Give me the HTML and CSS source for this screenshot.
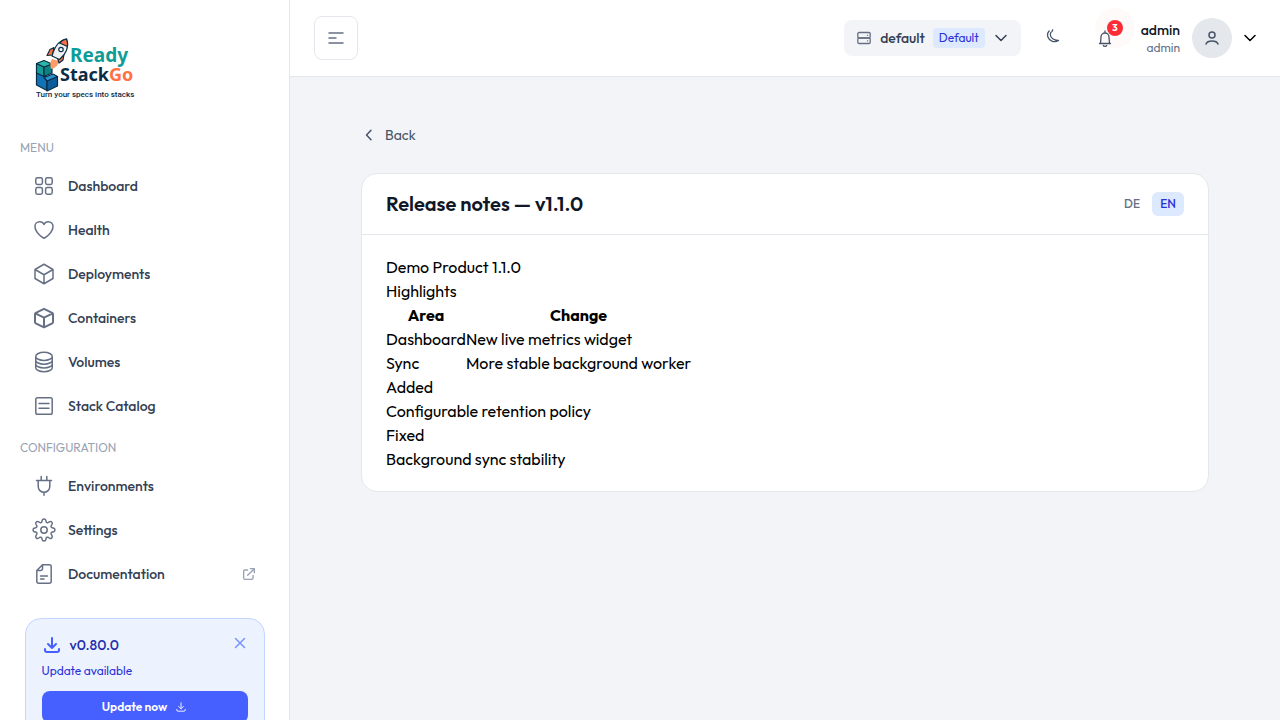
FILE: index.html
```html
<!DOCTYPE html>
<html lang="en">
<head>
  <meta charset="UTF-8">
  <meta name="viewport" content="width=device-width, initial-scale=1.0">
  <title>ReadyStackGo</title>
  <link rel="stylesheet" href="styles.css">
</head>

<body>
  <aside class="sidebar">
    <a href="#" class="logo" aria-label="ReadyStackGo">
      <svg width="110" height="68" viewBox="0 0 110 68">
        <!-- stacked cubes -->
        <g stroke="#0b2c45" stroke-width="1.2" stroke-linejoin="round">
          <path d="M6.500 38l10.500 5v13.500L6.500 51z" fill="#1173b5"/>
          <path d="M17 46.500l10.500-4v9.500L17 57z" fill="#0d5c99"/>
          <path d="M14 43.500l9-3.500 4.500 2.500L17 47z" fill="#2a94d0"/>
          <path d="M6.500 29.500l7.500 3.500v9.500L6.500 39z" fill="#159c97"/>
          <path d="M14 33l8-3v9l-8 3.500z" fill="#0c817f"/>
          <path d="M6.500 29.500L14 26.500l8 3.500-8 3z" fill="#2ab7aa"/>
        </g>
        <!-- rocket -->
        <path d="M22 25c-2 3-2 6-1 10 5-1 7-4 8-8z" fill="#ff9b66"/>
        <g stroke="#0b2c45" stroke-width="1.2" stroke-linejoin="round">
          <path d="M24 13.500l-4 2-3 6 5.500-.5zM34 20l-1 6-4 3-1.500-5z" fill="#ff7043"/>
          <path d="M36.500 5c-7 1-12 8-14.500 17l7.500 3.500c7-6 10-12 7-20.500z" fill="#eef1f2"/>
          <path d="M36.500 5c-3 .5-5 2-7 4l8 3.500c.3-3 0-5-1-7.500z" fill="#ff7043"/>
          <circle cx="31" cy="15.500" r="2.200" fill="#fff"/>
        </g>
        <text x="40" y="28" class="logo-ready">Ready</text>
        <text x="30" y="47" class="logo-stack">Stack<tspan class="logo-go">Go</tspan></text>
        <text x="6" y="63" class="logo-tagline">Turn your specs into stacks</text>
      </svg>
    </a>

    <nav>
      <h2 class="menu-title">MENU</h2>
      <ul class="menu">
        <li><a href="#" class="menu-item">
          <svg class="icon" viewBox="0 0 24 24"><rect x="3.8" y="3.8" width="6.6" height="6.6" rx="1.6"/><rect x="13.6" y="3.8" width="6.6" height="6.6" rx="1.6"/><rect x="3.8" y="13.6" width="6.6" height="6.6" rx="1.6"/><rect x="13.6" y="13.6" width="6.6" height="6.6" rx="1.6"/></svg>
          Dashboard</a></li>
        <li><a href="#" class="menu-item">
          <svg class="icon" viewBox="0 0 24 24"><path d="M21 8.25c0-2.485-2.099-4.5-4.688-4.5-1.935 0-3.597 1.126-4.312 2.733-.715-1.607-2.377-2.733-4.313-2.733C5.1 3.75 3 5.765 3 8.25c0 7.22 9 12 9 12s9-4.78 9-12z"/></svg>
          Health</a></li>
        <li><a href="#" class="menu-item">
          <svg class="icon" viewBox="0 0 24 24"><path d="M21 7.5l-9-5.25L3 7.5m18 0l-9 5.25m9-5.25v9l-9 5.25M3 7.5l9 5.25M3 7.5v9l9 5.25m0-9v9"/></svg>
          Deployments</a></li>
        <li><a href="#" class="menu-item">
          <svg class="icon icon-bold" viewBox="0 0 24 24"><path d="M12 2.8l8.2 4.1c.5.3.8.7.8 1.200v8c0 .5-.3.9-.8 1.200L12 21.300l-8.200-4c-.5-.3-.8-.7-.8-1.200v-8c0-.5.3-.9.800-1.200zM3.300 7.400L12 11.700l8.700-4.300M12 11.700v9.300"/></svg>
          Containers</a></li>
        <li><a href="#" class="menu-item">
          <svg class="icon" viewBox="0 0 24 24"><path d="M20.250 6.375c0 2.278-3.694 4.125-8.250 4.125S3.750 8.653 3.750 6.375m16.500 0c0-2.278-3.694-4.125-8.250-4.125S3.750 4.097 3.750 6.375m16.500 0v11.250c0 2.278-3.694 4.125-8.250 4.125s-8.250-1.847-8.250-4.125V6.375m16.500 0v3.750m-16.500-3.750v3.750m16.500 0v3.750C20.250 16.153 16.556 18 12 18s-8.250-1.847-8.250-4.125v-3.750m16.500 0c0 2.278-3.694 4.125-8.250 4.125s-8.250-1.847-8.250-4.125"/></svg>
          Volumes</a></li>
        <li><a href="#" class="menu-item">
          <svg class="icon" viewBox="0 0 24 24"><rect x="3.800" y="3.800" width="16.400" height="16.400" rx="1.800"/><path d="M7 9.500h10M7 14.200h10"/></svg>
          Stack Catalog</a></li>
      </ul>

      <h2 class="menu-title">CONFIGURATION</h2>
      <ul class="menu">
        <li><a href="#" class="menu-item">
          <svg class="icon" viewBox="0 0 24 24"><path d="M4.500 6.500h15M9.200 2.500v4M14.800 2.500v4M6.200 6.500v6a5.800 5.800 0 0 0 11.600 0v-6M12 18.300v3"/></svg>
          Environments</a></li>
        <li><a href="#" class="menu-item">
          <svg class="icon" viewBox="0 0 24 24"><path d="M10.100 2.600c.4-2.200 3.400-2.200 3.800 0l.2 1c.2 1 1.400 1.500 2.300.9l.8-.6c1.900-1.300 4 .8 2.700 2.700l-.6.8c-.6.9-.1 2.100.9 2.300l1.100.4c2.200.4 2.200 3.400 0 3.800l-1.100.2c-1 .2-1.500 1.400-.9 2.300l.6.900c1.300 1.900-.8 4-2.700 2.700l-.8-.6c-.9-.6-2.100-.1-2.300.9l-.2 1.100c-.4 2.200-3.400 2.200-3.800 0l-.2-1.100c-.2-1-1.400-1.500-2.300-.9l-.8.6c-1.900 1.300-4-.8-2.700-2.700l.6-.9c.6-.9.100-2.100-.9-2.300l-1.100-.2c-2.200-.4-2.200-3.400 0-3.800l1.100-.4c1-.2 1.500-1.400.9-2.300l-.6-.8c-1.300-1.900.8-4 2.700-2.700l.8.6c.9.600 2.100.1 2.300-.9z"/><circle cx="12" cy="12" r="3.200"/></svg>
          Settings</a></li>
        <li><a href="#" class="menu-item">
          <svg class="icon" viewBox="0 0 24 24"><path d="M10.500 2.800h6.700c1.200 0 2 .8 2 2v14.400c0 1.200-.8 2-2 2H6.800c-1.200 0-2-.8-2-2V8.500zM10.500 2.800v4c0 1-.7 1.700-1.700 1.700h-4M8.500 14h7M8.500 17h3.500"/></svg>
          Documentation
          <svg class="icon icon-external" viewBox="0 0 24 24"><path d="M10 6H6a2 2 0 0 0-2 2v10a2 2 0 0 0 2 2h10a2 2 0 0 0 2-2v-4M14 4h6m0 0v6m0-6L10 14"/></svg></a></li>
      </ul>
    </nav>

    <section class="update-card">
      <div class="update-head">
        <svg class="icon update-icon" viewBox="0 0 20 20"><path d="M10 3v10m-4-4l4 4 4-4M3 14v1a2 2 0 0 0 2 2h10a2 2 0 0 0 2-2v-1"/></svg>
        <span class="update-version">v0.80.0</span>
        <button type="button" class="update-close" aria-label="Dismiss">
          <svg class="icon" viewBox="0 0 16 20"><path d="M3.500 3.500l9 9m0-9l-9 9"/></svg>
        </button>
      </div>
      <p class="update-text">Update available</p>
      <button type="button" class="update-button">Update now
        <svg class="icon" viewBox="0 0 20 20"><path d="M10 3v10m-4-4l4 4 4-4M3 14v1a2 2 0 0 0 2 2h10a2 2 0 0 0 2-2v-1"/></svg>
      </button>
    </section>
  </aside>

  <div class="content">
    <header class="topbar">
      <button type="button" class="toggle" aria-label="Toggle sidebar">
        <svg class="icon" viewBox="0 0 16 12"><path d="M1 1h14M1 6h7M1 11h14"/></svg>
      </button>

      <div class="topbar-right">
        <button type="button" class="env-select">
          <svg class="icon" viewBox="0 0 16 16"><rect x="1.800" y="2.500" width="12.400" height="5.500" rx="1.200"/><rect x="1.800" y="8" width="12.400" height="5.500" rx="1.200"/><path d="M11.500 5.300h.2M11.500 10.800h.2"/></svg>
          <span class="env-name">default</span>
          <span class="env-badge">Default</span>
          <svg class="icon chevron" viewBox="0 0 16 16"><path d="M3 5.500l5 5 5-5"/></svg>
        </button>

        <div class="icon-buttons">
          <button type="button" class="icon-button" aria-label="Toggle dark mode">
            <svg class="icon" viewBox="0 0 20 20"><path d="M6.200 3C4.600 4.500 4.200 7 5 9.200c1.500 4 6.500 5.800 10.500 3.200-4.500.3-8-2.600-8.200-5.600-.1-1.800.2-2.800 1.700-3.300l.7-1.700"/></svg>
          </button>

          <button type="button" class="icon-button bell" aria-label="Notifications">
            <span class="ping"></span>
            <svg class="icon" viewBox="0 0 20 20"><path d="M4.500 15.500h11M5.500 15.500l.5-6.500a4 4 0 0 1 8 0l.5 6.500M10 3v1.500M8.300 17.500c.4 1.200 3 1.200 3.400 0"/></svg>
            <span class="bell-count">3</span>
          </button>
        </div>

        <button type="button" class="user">
          <span class="user-text">
            <span class="user-name">admin</span>
            <span class="user-role">admin</span>
          </span>
          <span class="avatar">
            <svg class="icon" viewBox="0 0 20 20"><circle cx="10" cy="7" r="3"/><path d="M4 16c1.500-4 10.500-4 12 0"/></svg>
          </span>
          <svg class="icon user-chevron" viewBox="0 0 12 12"><path d="M1 3.500l5 5 5-5"/></svg>
        </button>
      </div>
    </header>

    <main class="main">
      <a href="#" class="back">
        <svg class="icon" viewBox="0 0 16 16"><path d="M10 3.300L5.500 8l4.500 4.700"/></svg>
        Back
      </a>

      <article class="card">
        <div class="card-head">
          <h1>Release notes — v1.1.0</h1>
          <div class="languages">
            <button type="button" class="language">DE</button>
            <button type="button" class="language active">EN</button>
          </div>
        </div>
        <div class="card-body">
          <h2>Demo Product 1.1.0</h2>
          <h3>Highlights</h3>
          <table>
            <thead>
              <tr><th>Area</th><th>Change</th></tr>
            </thead>
            <tbody>
              <tr><td>Dashboard</td><td>New live metrics widget</td></tr>
              <tr><td>Sync</td><td>More stable background worker</td></tr>
            </tbody>
          </table>
          <h3>Added</h3>
          <ul>
            <li>Configurable retention policy</li>
          </ul>
          <h3>Fixed</h3>
          <ul>
            <li>Background sync stability</li>
          </ul>
        </div>
      </article>
    </main>
  </div>
</body>
</html>
```

FILE: styles.css
```css
* {
  box-sizing: border-box;
}

body {
  display: flex;
  height: 100vh;
  margin: 0;
  overflow: hidden;
  font-family: Outfit, Lato, sans-serif;
  font-size: 16px;
  line-height: 24px;
  color: #000;
  background-color: #f2f4f7;
}

h1, h2, h3, p, ul {
  margin: 0;
  padding: 0;
  font-size: inherit;
  font-weight: inherit;
}

ul {
  list-style: none;
}

a {
  color: inherit;
  text-decoration: none;
}

button {
  padding: 0;
  border: 0;
  background: none;
  color: inherit;
  font: inherit;
  cursor: pointer;
}

.icon {
  flex: none;
  fill: none;
  stroke: currentColor;
  stroke-width: 1.5;
  stroke-linecap: round;
  stroke-linejoin: round;
}

/* Sidebar */
.sidebar {
  flex: none;
  width: 290px;
  padding: 0 20px;
  overflow: hidden;
  background-color: #fff;
  border-right: 1px solid #e4e7ec;
}

.logo {
  display: block;
  padding: 34px 10px 36px;
}

.logo svg {
  display: block;
}

.logo text {
  font-family: "Noto Sans", sans-serif;
  font-weight: bold;
}

.logo-ready {
  font-size: 19px;
  fill: #0e9c97;
}

.logo-stack {
  font-size: 18px;
  fill: #0b2c45;
}

.logo-go {
  fill: #ff7043;
}

.logo .logo-tagline {
  font-family: Roboto, sans-serif;
  font-size: 8px;
  font-weight: 500;
  fill: #0b2c45;
}

.menu-title {
  margin-bottom: 8px;
  font-size: 12px;
  line-height: 20px;
  color: #98a2b3;
}

.menu {
  display: flex;
  flex-direction: column;
  gap: 4px;
  margin-bottom: 12px;
}

.menu-item {
  display: flex;
  align-items: center;
  gap: 12px;
  height: 40px;
  padding: 0 12px;
  font-size: 14px;
  font-weight: 500;
  color: #344054;
}

.menu-item .icon {
  width: 24px;
  height: 24px;
  color: #667085;
}

.menu-item .icon-bold {
  stroke-width: 2;
}

.menu-item .icon-external {
  width: 16px;
  height: 16px;
  margin-left: auto;
  stroke-width: 2;
  color: #98a2b3;
}

.update-card {
  width: 240px;
  margin: 24px auto 0;
  padding: 16px;
  border: 1px solid #c2d6ff;
  border-radius: 16px;
  background-color: #ecf3ff;
}

.update-head {
  display: flex;
  align-items: center;
  gap: 8px;
  height: 20px;
}

.update-icon {
  width: 20px;
  height: 20px;
  stroke-width: 2;
  color: #465fff;
}

.update-version {
  font-size: 14px;
  font-weight: 500;
  color: #252dae;
}

.update-close {
  display: flex;
  margin-left: auto;
  color: #7592ff;
}

.update-close .icon {
  width: 16px;
  height: 20px;
}

.update-text {
  margin: 8px 0 12px;
  font-size: 12px;
  line-height: 16px;
  color: #2a31d8;
}

.update-button {
  display: flex;
  align-items: center;
  justify-content: center;
  gap: 8px;
  width: 100%;
  height: 32px;
  border-radius: 8px;
  background-color: #465fff;
  font-size: 12px;
  font-weight: 600;
  color: #fff;
}

.update-button .icon {
  width: 12px;
  height: 12px;
}

/* Top bar */
.content {
  flex: 1;
  min-width: 0;
  overflow: auto;
}

.topbar {
  display: flex;
  align-items: center;
  justify-content: space-between;
  padding: 16px 24px;
  background-color: #fff;
  border-bottom: 1px solid #e4e7ec;
}

.toggle {
  display: flex;
  align-items: center;
  justify-content: center;
  width: 44px;
  height: 44px;
  border: 1px solid #e4e7ec;
  border-radius: 8px;
  color: #667085;
}

.toggle .icon {
  width: 16px;
  height: 12px;
}

.topbar-right {
  display: flex;
  align-items: center;
}

.env-select {
  display: flex;
  align-items: center;
  gap: 8px;
  height: 36px;
  padding: 0 12px;
  border-radius: 8px;
  background-color: #f2f4f7;
  font-size: 14px;
  color: #667085;
}

.env-select .icon {
  width: 16px;
  height: 16px;
  stroke-width: 1.3;
}

.env-name {
  font-weight: 500;
  color: #344054;
}

.env-badge {
  padding: 0 6px;
  border-radius: 4px;
  background-color: #dde9ff;
  font-size: 12px;
  line-height: 20px;
  color: #2a31d8;
}

.env-select .chevron {
  stroke-width: 1.5;
  color: #344054;
}

.icon-buttons {
  display: flex;
  gap: 8px;
  margin: 0 14px 0 10px;
}

.icon-button {
  position: relative;
  display: flex;
  align-items: center;
  justify-content: center;
  width: 44px;
  height: 44px;
  color: #475467;
}

.icon-button .icon {
  width: 20px;
  height: 20px;
  stroke-width: 1.3;
}

.bell-count {
  position: absolute;
  top: 4px;
  right: 4px;
  width: 16px;
  height: 16px;
  border-radius: 50%;
  background-color: #fb2c36;
  font-size: 10px;
  font-weight: bold;
  line-height: 16px;
  text-align: center;
  color: #fff;
}

.ping {
  position: absolute;
  top: -8px;
  right: -8px;
  width: 40px;
  height: 40px;
  border-radius: 50%;
  background-color: #fffafa;
}

.bell .icon {
  position: relative;
}

.user {
  display: flex;
  align-items: center;
  gap: 12px;
}

.user-text {
  display: flex;
  flex-direction: column;
  text-align: right;
}

.user-name {
  font-size: 14px;
  font-weight: 500;
  line-height: 20px;
  color: #101828;
}

.user-role {
  font-size: 12px;
  line-height: 16px;
  color: #667085;
}

.avatar {
  display: flex;
  align-items: center;
  justify-content: center;
  width: 40px;
  height: 40px;
  border-radius: 50%;
  background-color: #e4e7ec;
  color: #475467;
}

.avatar .icon {
  width: 20px;
  height: 20px;
}

.user-chevron {
  width: 12px;
  height: 12px;
}

/* Release notes */
.main {
  max-width: 896px;
  margin: 0 auto;
  padding: 48px 24px;
}

.back {
  display: flex;
  align-items: center;
  gap: 8px;
  width: max-content;
  margin-bottom: 28px;
  font-size: 14px;
  line-height: 20px;
  color: #475467;
}

.back .icon {
  width: 16px;
  height: 16px;
}

.card {
  border: 1px solid #e4e7ec;
  border-radius: 16px;
  background-color: #fff;
}

.card-head {
  display: flex;
  align-items: center;
  justify-content: space-between;
  padding: 16px 24px;
  border-bottom: 1px solid #e4e7ec;
}

.card-head h1 {
  font-size: 20px;
  font-weight: 600;
  line-height: 28px;
  color: #101828;
}

.languages {
  display: flex;
  gap: 4px;
}

.language {
  width: 32px;
  height: 24px;
  border-radius: 6px;
  font-size: 12px;
  font-weight: 500;
  color: #667085;
}

.language.active {
  background-color: #dde9ff;
  color: #2a31d8;
}

.card-body {
  padding: 20px 24px;
}

.card-body table {
  border-collapse: collapse;
}

.card-body th,
.card-body td {
  padding: 0;
}
```
